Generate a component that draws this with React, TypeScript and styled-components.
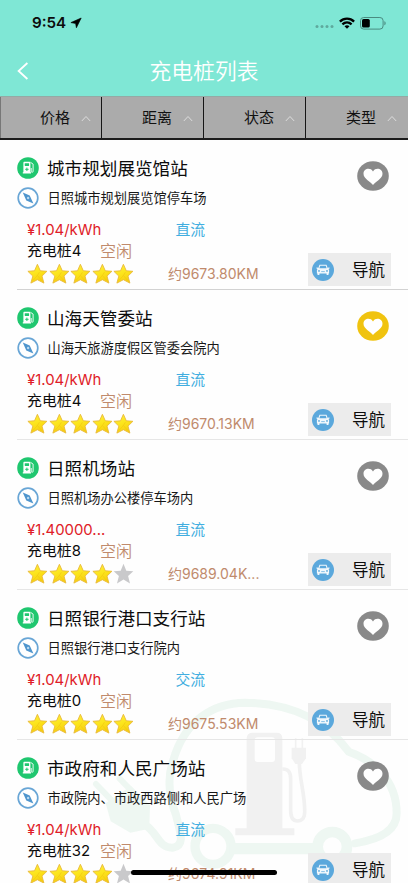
import React from 'react';
import styled, { createGlobalStyle } from 'styled-components';

const GlobalStyle = createGlobalStyle`
  * { box-sizing: border-box; }
  html, body { margin: 0; background: #fff; }
  body { overflow: hidden; }
  body, button { font-family: Inter, "Noto Sans CJK SC", sans-serif; }
`;

const Screen = styled.div`
  position: relative;
  width: 408px;
  height: 883px;
  overflow: hidden;
  background: #fefefe;
  color: #0c0c0c;
  display: flex;
  flex-direction: column;
`;

const Header = styled.header`
  height: 96px;
  flex: none;
  background: #7fe7d5;
`;

const StatusBar = styled.div`
  height: 46px;
  padding: 0 22px 0 32px;
  display: flex;
  align-items: center;
  justify-content: space-between;
`;

const Clock = styled.div`
  display: flex;
  align-items: center;
  gap: 4px;
  font-size: 15.2px;
  font-weight: 600;
  line-height: 46px;
`;

const StatusIcons = styled.div`
  display: flex;
  align-items: center;
  gap: 5px;
`;

const NavBar = styled.div`
  height: 50px;
  display: grid;
  grid-template-columns: 46px 1fr 46px;
  align-items: center;
`;

const BackButton = styled.button`
  border: 0;
  padding: 0 0 0 17px;
  background: none;
  display: flex;
`;

const PageTitle = styled.h1`
  margin: 0;
  color: #fff;
  font-size: 21.8px;
  font-weight: 350;
  line-height: 50px;
  text-align: center;
`;

const FilterBar = styled.nav`
  height: 44px;
  flex: none;
  display: grid;
  grid-template-columns: repeat(4, 1fr);
  background: #ababab;
  border-bottom: 2px solid #1c1c1c;
  border-top: 1px solid #94aaa5;
`;

const FilterTab = styled.button`
  border: 0;
  border-right: 1.5px solid #161616;
  background: none;
  padding: 1px 10px 0 40px;
  display: flex;
  align-items: center;
  justify-content: space-between;
  font-size: 15px;
  line-height: 20px;
  color: #111;
  &:first-child { border-left: 1px solid #777; padding-left: 39px; }
  &:last-child { border-right: 0; padding-right: 11px; }
`;

const List = styled.main`
  position: relative;
  flex: none;
`;

const Station = styled.article`
  height: 150px;
  margin-left: 17px;
  padding-top: 13px;
  border-bottom: 1px solid #e6e6e6;
  display: flex;
  justify-content: space-between;
  &:first-child { border-bottom-color: #d2d2d2; }
`;

const Info = styled.div`
  width: 274px;
`;

const IconLine = styled.div`
  height: 30px;
  display: flex;
  align-items: center;
  gap: 8px;
  white-space: nowrap;
`;

const Name = styled.h2`
  margin: 0;
  padding-top: 2px;
  font-size: 17.6px;
  font-weight: 400;
  line-height: 30px;
`;

const Address = styled.span`
  padding-left: 0.5px;
  font-size: 13.25px;
  line-height: 30px;
  color: #181818;
`;

const Details = styled.div`
  padding: 6px 0 0 10px;
`;

const DetailLine = styled.div<{ $height: number; $first: number }>`
  height: ${(p) => p.$height}px;
  display: grid;
  grid-template-columns: ${(p) => p.$first}px 1fr;
  align-items: center;
  white-space: nowrap;
  line-height: ${(p) => p.$height}px;
`;

const Price = styled.span`
  padding-top: 1px;
  color: #e01c28;
  font-size: 14.9px;
`;

const Current = styled.span`
  padding-top: 1px;
  color: #42aee0;
  font-size: 14.8px;
`;

const Piles = styled.span`
  padding-top: 1px;
  font-size: 14.9px;
`;

const State = styled.span`
  padding-top: 1px;
  color: #c08a6c;
  font-size: 16px;
  font-weight: 350;
`;

const Stars = styled.span`
  display: flex;
  gap: 0.6px;
`;

const Distance = styled.span`
  color: #c08a6c;
  font-size: 14px;
`;

const Actions = styled.div`
  width: 83px;
  margin-right: 17px;
  padding: 8px 0 3px;
  display: flex;
  flex-direction: column;
  align-items: flex-end;
  justify-content: space-between;
`;

const Favorite = styled.button`
  border: 0;
  padding: 0;
  margin-right: 2px;
  background: none;
  display: flex;
`;

const NavigateButton = styled.button`
  width: 83px;
  height: 33px;
  border: 0;
  padding: 0 6px 0 4px;
  background: #ececec;
  display: flex;
  align-items: center;
  justify-content: space-between;
  color: #0c0c0c;
  font-size: 16.5px;
  line-height: 33px;
`;

const NavigateLabel = styled.span`
  padding-top: 2px;
`;

const Watermark = styled.svg`
  position: absolute;
  left: 80px;
  top: 680px;
`;

const HomeIndicator = styled.div`
  position: absolute;
  left: 131px;
  top: 870px;
  width: 146px;
  height: 5px;
  border-radius: 3px;
  background: #000;
`;

const LocationIcon = () => (
  <svg width="12" height="12" viewBox="0 0 12 12">
    <path d="M11.2 1 6.4 10.8 5.6 6.5.9 5.6Z" fill="#000" stroke="#000" strokeWidth=".6" strokeLinejoin="round" />
  </svg>
);

const SignalIcon = () => (
  <svg width="19" height="12" viewBox="0 0 19 12">
    {[2, 7, 12, 17].map((x) => (
      <circle key={x} cx={x} cy="9.5" r="1.5" fill="#5fa99d" />
    ))}
  </svg>
);

const WifiIcon = () => (
  <svg width="16" height="12" viewBox="0 0 16 12">
    <g fill="none" stroke="#000" strokeWidth="2.3">
      <path d="M.9 4.6C5 .6 11 .6 15.1 4.6" />
      <path d="M3.4 7.3c2.7-2.5 6.5-2.5 9.2 0" />
    </g>
    <path d="M8 11.7 5.5 9.2c1.4-1.3 3.6-1.3 5 0Z" />
  </svg>
);

const BatteryIcon = () => (
  <svg width="26" height="13" viewBox="0 0 26 13">
    <rect x=".5" y=".5" width="22.6" height="11.6" rx="3.2" fill="none" stroke="#4a8b80" />
    <rect x="2" y="2" width="7.8" height="8.6" rx="1.6" />
    <path d="M24.4 4.3v4c1.7-.7 1.7-3.3 0-4Z" fill="#4a8b80" />
  </svg>
);

const BackIcon = () => (
  <svg width="12" height="18" viewBox="0 0 12 18" fill="none" stroke="#fff" strokeWidth="1.8">
    <path d="M10.4 1 1.6 9l8.8 8" />
  </svg>
);

const CaretIcon = () => (
  <svg width="10" height="7" viewBox="0 0 10 7" fill="none" stroke="#dcdcdc" strokeWidth="1">
    <path d="M.8 6 5 1.5 9.200 6" />
  </svg>
);

const PumpIcon = () => (
  <svg width="22" height="22" viewBox="0 0 22 22">
    <circle cx="11" cy="11" r="10.8" fill="#1fc76f" />
    <path d="M7.3 4.8h5.2q.9 0 .9.9v9.6h.6v1.3H5.8v-1.3h.6V5.7q0-.9.9-.9Z" fill="#fff" />
    <rect x="7.7" y="6.200" width="4.4" height="2.8" rx=".4" fill="#1fc76f" />
    <path d="M9.9 10.6v3.4M8.200 12.3h3.4" stroke="#1fc76f" strokeWidth="1" />
    <path d="m13.5 5.300 2.6 1.800v7.200q0 1-1 1-.9 0-.9-1V11" fill="none" stroke="#fff" strokeWidth=".9" />
  </svg>
);

const CompassIcon = () => (
  <svg width="22" height="22" viewBox="0 0 22 22">
    <circle cx="11" cy="11" r="9.8" fill="#fff" stroke="#69a6d6" strokeWidth="1.7" />
    <path d="M5.800 5.600 12.700 8.600l3.700 7.800L9.300 13.400Z" fill="#4f95cd" />
    <circle cx="11.1" cy="11" r="1.2" fill="#b9d8ef" />
  </svg>
);

const StarIcon = ({ on }: { on: boolean }) => (
  <svg width="21" height="22" viewBox="0 0 21 22">
    {on ? (
      <>
        <defs>
          <linearGradient id="starFill" x1="0" y1="0" x2="0.4" y2="1">
            <stop offset="0" stopColor="#fdf046" />
            <stop offset=".55" stopColor="#fce51c" />
            <stop offset="1" stopColor="#f7d010" />
          </linearGradient>
        </defs>
        <path
          d="m10.4 1.300 2.900 6.500 6.600.5-4.900 4.800 1.900 7-6.500-3.400-6.500 3.400 1.900-7L.9 8.300l6.600-.5Z"
          fill="url(#starFill)"
          stroke="#e9b93a"
          strokeWidth=".9"
          strokeLinejoin="round"
        />
        <path d="m10.400 12.500 2-3.300M10.400 12.500l4.500 5.300M10.400 12.500l-4.800 5.300" stroke="#f0c414" strokeWidth=".6" />
      </>
    ) : (
      <path d="m10.5 .800 2.800 6.900 7 .6-5.200 4.800 1.900 7.400-6.500-3.900-6.500 3.900 1.900-7.400L.7 8.300l7-.6Z" fill="#c9c9cb" />
    )}
  </svg>
);

const HeartIcon = ({ color }: { color: string }) => (
  <svg width="32" height="30" viewBox="0 0 32 30">
    <ellipse cx="16" cy="15" rx="15.8" ry="14.8" fill={color} />
    <path
      d="M16 24C14.200 21 6.500 18 6.500 12.700 6.500 7.400 13.400 6.200 16 10.400c2.600-4.200 9.500-3 9.500 2.300C25.500 18 17.800 21 16 24Z"
      fill="#fff"
    />
  </svg>
);

const CarIcon = () => (
  <svg width="22" height="22" viewBox="0 0 22 22">
    <circle cx="11" cy="11" r="11" fill="#5ba8dc" />
    <path
      d="M7.500 5.800h7l1.200 3.300.9-.500h.9v1l-1 .3.600 1.200v3.500h-.6v1.400h-1.900v-1.400H7.400V16H5.500v-1.400h-.6v-3.500l.6-1.200-1-.3v-1h.9l.9.500Z"
      fill="#f2f8fc"
    />
    <path d="M8.200 6.800h5.600l.8 2.500H7.400Z" fill="#5ba8dc" />
    <circle cx="7" cy="11.900" r=".9" fill="#5ba8dc" />
    <circle cx="15" cy="11.900" r=".9" fill="#5ba8dc" />
    <path d="M9.200 12.600h3.600" stroke="#5ba8dc" strokeWidth=".7" />
  </svg>
);

const CarWatermark = () => (
  <Watermark width="328" height="203" viewBox="0 0 984 609" fill="none">
    <g stroke="#eef7f2" strokeLinecap="round">
      <path
        d="M195 435C232 455 235 505 278 503C318 498 300 455 288 405C265 345 262 290 280 240C315 120 400 69 495 68C645 70 740 125 806 215C880 240 950 300 950 400C950 455 890 480 825 490"
        strokeWidth="24"
      />
      <circle cx="399" cy="499" r="54" strokeWidth="28" />
      <path d="M448 506H716" strokeWidth="34" strokeLinecap="butt" />
      <circle cx="757" cy="500" r="44" strokeWidth="32" />
      <path d="M48 312 98 364M119 296 164 342" strokeWidth="18" />
    </g>
    <path d="M77 370 153 318 210 375 208 446 151 458 92 424Z" fill="#eef7f2" />
    <path
      fillRule="evenodd"
      d="M518 158h72q17 0 17 17v270h36v21H466v-21h34V175q0-17 18-17ZM533 172q-9 0-9 9v56q0 9 9 9h43q9 0 9-9v-56q0-9-9-9Z"
      fill="#f1f1f1"
    />
    <path d="M607 267q25-2 25 30v94q0 32 20 32 24-1 22-32c0-55-17-95-16-150" stroke="#f1f1f1" strokeWidth="11" />
    <path d="M635 203h43v32l-12 17h-20l-11-17Z" fill="#f1f1f1" />
    <path d="M647 175v30M667 175v30" stroke="#f1f1f1" strokeWidth="5" />
  </Watermark>
);

interface StationData {
  name: string;
  address: string;
  price: string;
  current: string;
  piles: number;
  stars: number;
  distance: string;
  favorite?: boolean;
}

const stations: StationData[] = [
  { name: '城市规划展览馆站', address: '日照城市规划展览馆停车场', price: '¥1.04/kWh', current: '直流', piles: 4, stars: 5, distance: '约9673.80KM' },
  { name: '山海天管委站', address: '山海天旅游度假区管委会院内', price: '¥1.04/kWh', current: '直流', piles: 4, stars: 5, distance: '约9670.13KM', favorite: true },
  { name: '日照机场站', address: '日照机场办公楼停车场内', price: '¥1.40000...', current: '直流', piles: 8, stars: 4, distance: '约9689.04K...' },
  { name: '日照银行港口支行站', address: '日照银行港口支行院内', price: '¥1.04/kWh', current: '交流', piles: 0, stars: 5, distance: '约9675.53KM' },
  { name: '市政府和人民广场站', address: '市政院内、市政西路侧和人民广场', price: '¥1.04/kWh', current: '直流', piles: 32, stars: 4, distance: '约9674.91KM' },
];

const StationRow = ({ station }: { station: StationData }) => (
  <Station>
    <Info>
      <IconLine>
        <PumpIcon />
        <Name>{station.name}</Name>
      </IconLine>
      <IconLine>
        <CompassIcon />
        <Address>{station.address}</Address>
      </IconLine>
      <Details>
        <DetailLine $height={20} $first={148.5}>
          <Price>{station.price}</Price>
          <Current>{station.current}</Current>
        </DetailLine>
        <DetailLine $height={22} $first={73}>
          <Piles>充电桩{station.piles}</Piles>
          <State>空闲</State>
        </DetailLine>
        <DetailLine $height={25} $first={141}>
          <Stars>
            {[0, 1, 2, 3, 4].map((i) => (
              <StarIcon key={i} on={i < station.stars} />
            ))}
          </Stars>
          <Distance>{station.distance}</Distance>
        </DetailLine>
      </Details>
    </Info>
    <Actions>
      <Favorite aria-label="收藏">
        <HeartIcon color={station.favorite ? '#f0c30f' : '#898989'} />
      </Favorite>
      <NavigateButton>
        <CarIcon />
        <NavigateLabel>导航</NavigateLabel>
      </NavigateButton>
    </Actions>
  </Station>
);

export default function App() {
  return (
    <Screen>
      <GlobalStyle />
      <CarWatermark />
      <Header>
        <StatusBar>
          <Clock>
            9:54
            <LocationIcon />
          </Clock>
          <StatusIcons>
            <SignalIcon />
            <WifiIcon />
            <BatteryIcon />
          </StatusIcons>
        </StatusBar>
        <NavBar>
          <BackButton aria-label="返回">
            <BackIcon />
          </BackButton>
          <PageTitle>充电桩列表</PageTitle>
        </NavBar>
      </Header>
      <FilterBar>
        {['价格', '距离', '状态', '类型'].map((label) => (
          <FilterTab key={label}>
            {label}
            <CaretIcon />
          </FilterTab>
        ))}
      </FilterBar>
      <List>
        {stations.map((station) => (
          <StationRow key={station.name} station={station} />
        ))}
      </List>
      <HomeIndicator />
    </Screen>
  );
}
